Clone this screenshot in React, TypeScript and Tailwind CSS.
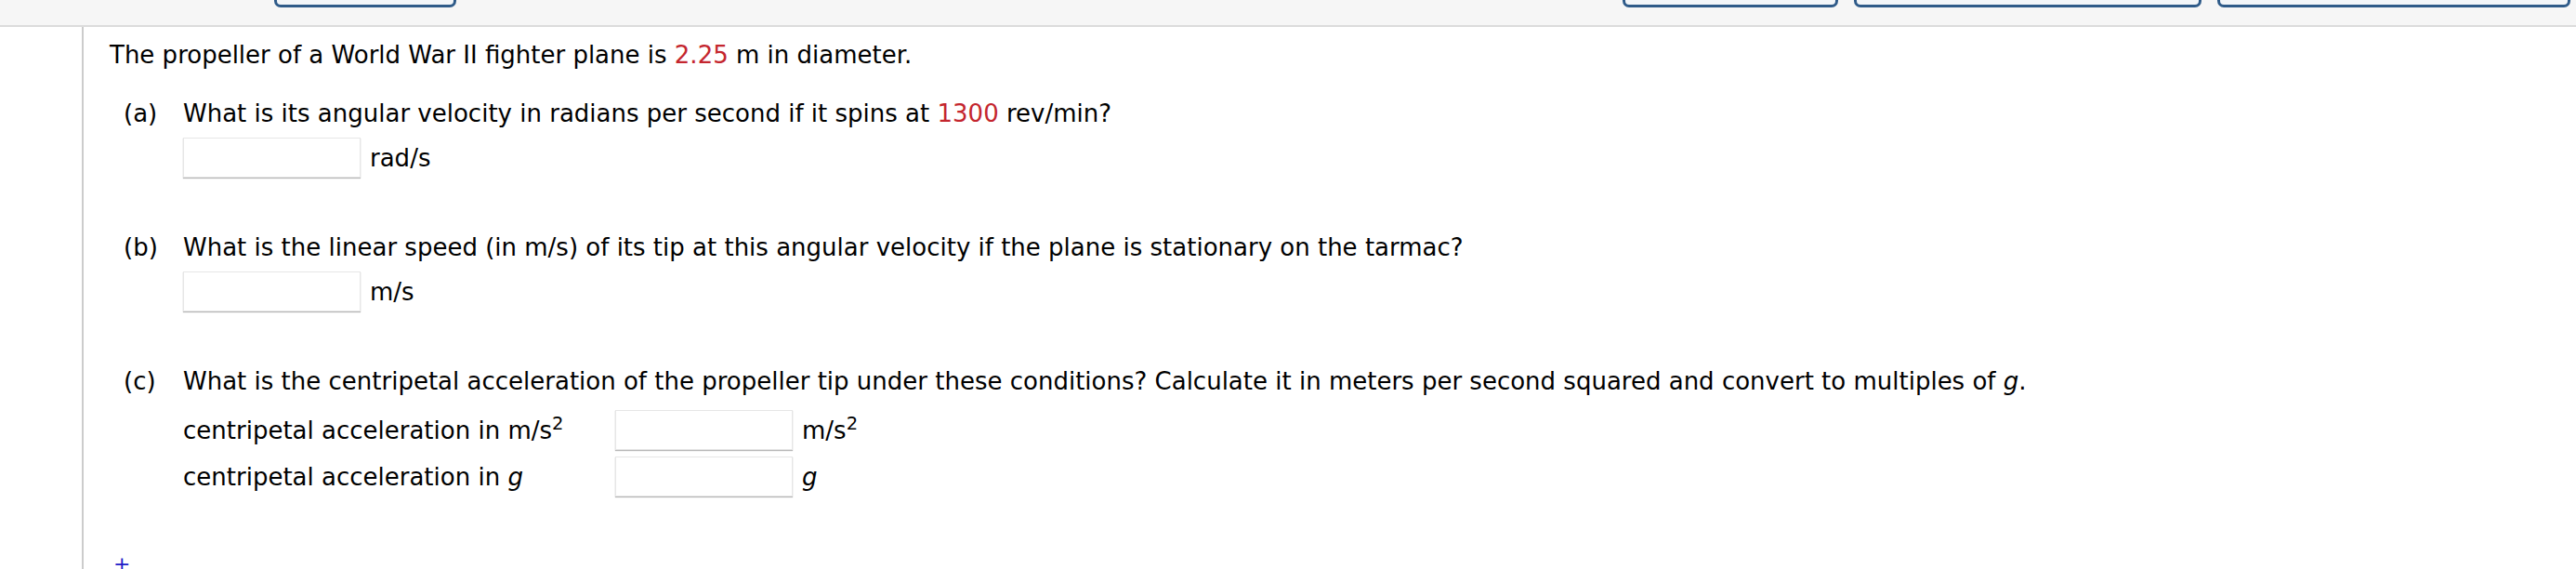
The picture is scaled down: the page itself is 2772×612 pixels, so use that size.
import React from 'react';

// Question page: propeller problem with three answer parts

const RED = 'text-[#c4262e]';

function AnswerBox({ className = '' }: { className?: string }) {
  return (
    <div
      className={`h-[43px] w-[191px] shrink-0 border border-[#e6e6e6] bg-white shadow-[0_1px_1px_rgba(0,0,0,0.28)] ${className}`}
    />
  );
}

function TopButton({ width }: { width: string }) {
  return (
    <div
      className={`${width} h-[8px] rounded-b-[7px] border-[3px] border-t-0 border-[#2f5b89] bg-[#f3f6f9]`}
    />
  );
}

function PartLabel({ letter, children }: { letter: string; children: React.ReactNode }) {
  return (
    <div className="flex leading-[30px]">
      <span className="ml-[15px] w-[64px] shrink-0">({letter})</span>
      <span>{children}</span>
    </div>
  );
}

export default function App() {
  return (
    <div className="min-h-[612px] overflow-hidden bg-white font-['Verdana','DejaVu_Sans',sans-serif] text-[26px] text-black">
      {/* Header strip with the cut-off toolbar buttons */}
      <div className="flex h-[29px] items-start border-b-2 border-[#dcdcdc] bg-[#f6f6f6] pr-[6px]">
        <div className="ml-[295px]">
          <TopButton width="w-[196px]" />
        </div>
        <div className="flex-1" />
        <div className="flex gap-[17px]">
          <TopButton width="w-[232px]" />
          <TopButton width="w-[374px]" />
          <TopButton width="w-[380px]" />
        </div>
      </div>

      <div className="flex">
        <div className="w-[88px] shrink-0" />
        <div className="min-h-[583px] flex-1 border-l-2 border-[#cccccc] pl-[28px]">
          <p className="mt-[15px] leading-[30px]">
            The propeller of a World War II fighter plane is <span className={RED}>2.25</span> m in diameter.
          </p>

          {/* (a) */}
          <div className="mt-[33px]">
            <PartLabel letter="a">
              What is its angular velocity in radians per second if it spins at{' '}
              <span className={RED}>1300</span> rev/min?
            </PartLabel>
            <div className="ml-[79px] mt-[11px] flex items-center gap-[10px]">
              <AnswerBox />
              <span className="leading-[30px]">rad/s</span>
            </div>
          </div>

          {/* (b) */}
          <div className="mt-[60px]">
            <PartLabel letter="b">
              What is the linear speed (in m/s) of its tip at this angular velocity if the plane is stationary on the
              tarmac?
            </PartLabel>
            <div className="ml-[79px] mt-[11px] flex items-center gap-[10px]">
              <AnswerBox />
              <span className="leading-[30px]">m/s</span>
            </div>
          </div>

          {/* (c) */}
          <div className="mt-[60px]">
            <PartLabel letter="c">
              What is the centripetal acceleration of the propeller tip under these conditions? Calculate it in meters
              per second squared and convert to multiples of <i>g</i>.
            </PartLabel>
            <div className="ml-[79px] mt-[16px] flex flex-col gap-[7px]">
              <div className="flex items-center">
                <span className="w-[465px] shrink-0 leading-[30px]">
                  centripetal acceleration in m/s<sup>2</sup>
                </span>
                <AnswerBox className="h-[42px]" />
                <span className="ml-[10px] leading-[30px]">
                  m/s<sup>2</sup>
                </span>
              </div>
              <div className="flex items-center">
                <span className="w-[465px] shrink-0 leading-[30px]">
                  centripetal acceleration in <i>g</i>
                </span>
                <AnswerBox />
                <span className="ml-[10px] leading-[30px]">
                  <i>g</i>
                </span>
              </div>
            </div>
          </div>

          <div className="ml-[4px] mt-[62px] text-[22px] leading-[22px] text-[#1c1cc8]">+</div>
        </div>
      </div>
    </div>
  );
}
